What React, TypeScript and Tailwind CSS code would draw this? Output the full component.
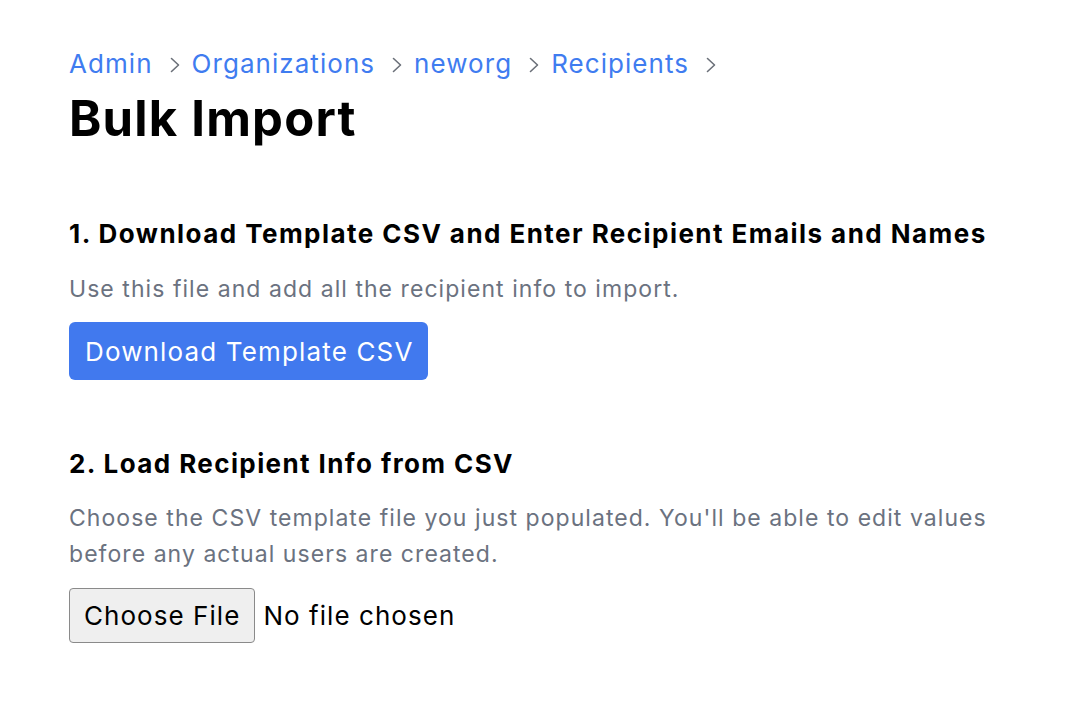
import React from "react";

function Chevron() {
  return (
    <svg width="10" height="16" viewBox="0 0 10 16" className="ml-[17px] mr-[12px] mt-[2px] shrink-0" fill="none">
      <polyline points="1.5,1.5 8.5,8 1.5,14.5" stroke="#6b7079" strokeWidth="1.6" strokeLinecap="round" strokeLinejoin="round" />
    </svg>
  );
}

export default function App() {
  const crumbs = ["Admin", "Organizations", "neworg", "Recipients"];
  return (
    <div className="min-h-[726px] bg-white pl-[69px] pt-[44px] text-black" style={{ fontFamily: "Inter, 'Noto Sans', sans-serif" }}>
      <nav className="flex items-center text-[26px] leading-[39px] tracking-[1.05px]">
        {crumbs.map((c) => (
          <React.Fragment key={c}>
            <a className="text-[#3f7cf0]">{c}</a>
            <Chevron />
          </React.Fragment>
        ))}
      </nav>
      <h1 className="text-[49px] font-bold leading-[60px] mt-[6px] tracking-[1.2px]">Bulk Import</h1>

      <h2 className="mt-[67px] text-[26px] font-bold leading-[36px] tracking-[1.45px]">
        1. Download Template CSV and Enter Recipient Emails and Names
      </h2>
      <p className="mt-[19px] text-[23px] leading-[36px] tracking-[1.05px] text-[#6b7280]">
        Use this file and add all the recipient info to import.
      </p>
      <button className="mt-[15px] h-[58px] rounded-[6px] bg-[#4179ee] pl-[16px] pr-[15px] text-[26px] tracking-[1.15px] text-white">
        Download Template CSV
      </button>

      <h2 className="mt-[66px] text-[26px] font-bold leading-[36px] tracking-[1.4px]">2. Load Recipient Info from CSV</h2>
      <p className="mt-[18px] max-w-[935px] text-[23px] leading-[36px] tracking-[1.05px] text-[#6b7280]">
        Choose the CSV template file you just populated. You'll be able to edit values before any actual users are created.
      </p>
      <div className="mt-[16px] flex items-center text-[26px] tracking-[1.05px]">
        <button className="h-[55px] rounded-[4px] border border-[#8a8a8a] bg-[#efefef] px-[14px] text-black">
          Choose File
        </button>
        <span className="ml-[8px]">No file chosen</span>
      </div>
    </div>
  );
}
